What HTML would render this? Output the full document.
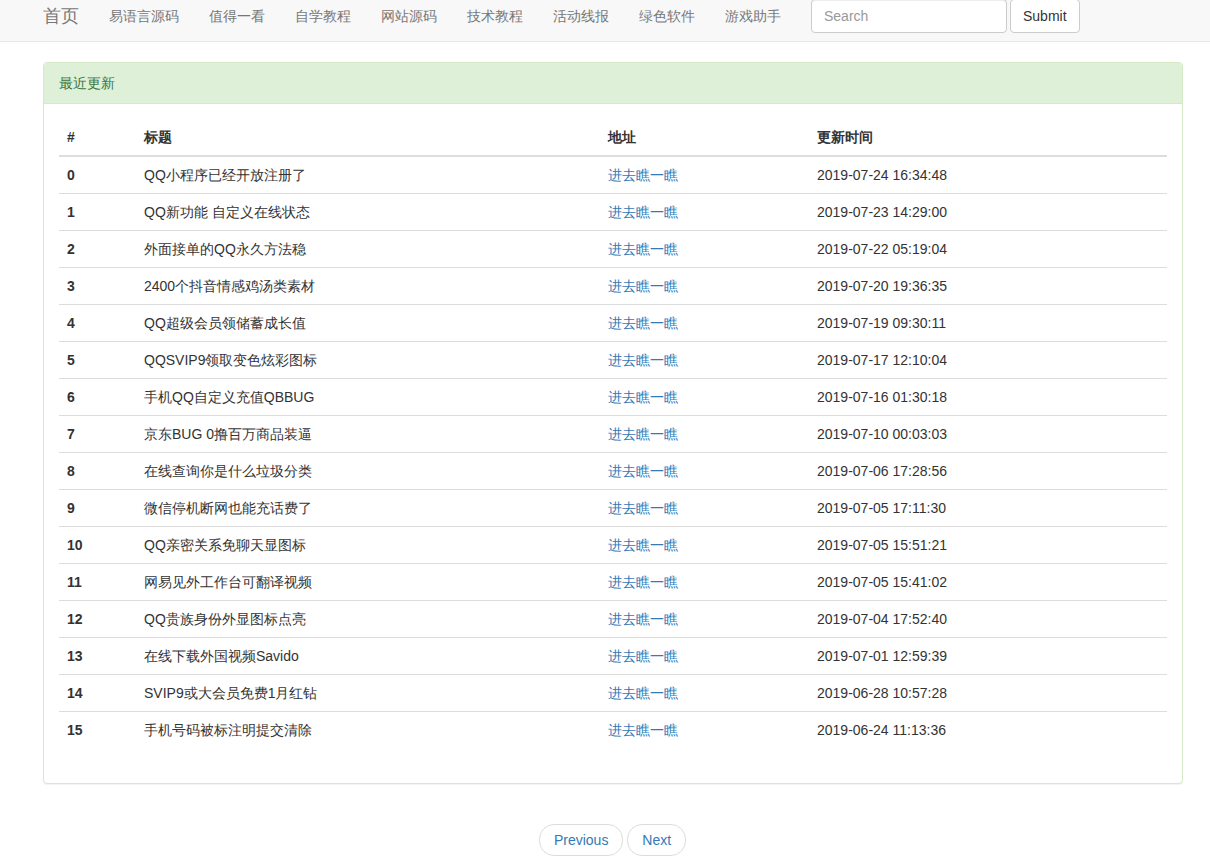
<!DOCTYPE html>
<html><head><meta charset="utf-8">
<style>
*{box-sizing:border-box;margin:0;padding:0}
html,body{width:1210px;height:861px;overflow:hidden;background:#fff}
body{font-family:"Liberation Sans",sans-serif;font-size:14px;line-height:20px;color:#333;position:relative}
.navbar{position:absolute;left:0;top:-10px;width:1210px;height:52px;background:#f8f8f8;border:1px solid #e7e7e7;border-left:0;border-right:0}
.brand{position:absolute;left:43px;top:15px;font-size:18px;line-height:20px;color:#777;white-space:nowrap}
.nav{position:absolute;left:94px;top:0;display:flex;list-style:none}
.nav li a{display:block;padding:15px;line-height:20px;color:#777;white-space:nowrap}
.sform{position:absolute;left:811px;top:8px;display:flex}
.inp{width:196px;height:34px;border:1px solid #ccc;border-radius:4px;background:#fff;box-shadow:inset 0 1px 1px rgba(0,0,0,.075);padding:6px 12px;color:#999;line-height:20px}
.btn{margin-left:3px;height:34px;border:1px solid #ccc;border-radius:4px;background:#fff;padding:6px 12px;color:#333;line-height:20px}
.panel{position:absolute;left:43px;top:62px;width:1140px;height:722px;border:1px solid #d6e9c6;border-radius:4px;background:#fff;box-shadow:0 1px 1px rgba(0,0,0,.05)}
.ph{height:41px;padding:10px 15px;background:#dff0d8;color:#3c763d;border-bottom:1px solid #d6e9c6;border-top-left-radius:3px;border-top-right-radius:3px}
.pb{padding:15px}
table{border-collapse:collapse;width:1108px;border-spacing:0}
th{text-align:left;font-weight:bold;padding:8px;line-height:20px;border-bottom:2px solid #ddd;vertical-align:bottom}
td{padding:8px;line-height:20px;border-top:1px solid #ddd;vertical-align:top}
td.n{font-weight:bold}
a{color:#337ab7;text-decoration:none}
.pager{position:absolute;left:0;top:824px;width:1225px;text-align:center;white-space:nowrap}
.pager a{display:inline-block;padding:5px 14px;border:1px solid #ddd;border-radius:15px;background:#fff;line-height:20px}
</style></head><body>
<div class="navbar">
<span class="brand">首页</span>
<ul class="nav"><li><a>易语言源码</a></li><li><a>值得一看</a></li><li><a>自学教程</a></li><li><a>网站源码</a></li><li><a>技术教程</a></li><li><a>活动线报</a></li><li><a>绿色软件</a></li><li><a>游戏助手</a></li></ul>
<div class="sform"><div class="inp">Search</div><div class="btn">Submit</div></div>
</div>
<div class="panel">
<div class="ph">最近更新</div>
<div class="pb">
<table>
<colgroup><col style="width:77px"><col style="width:464px"><col style="width:209px"><col style="width:358px"></colgroup>
<thead><tr><th>#</th><th>标题</th><th>地址</th><th>更新时间</th></tr></thead>
<tbody>
<tr><td class="n">0</td><td>QQ小程序已经开放注册了</td><td><a>进去瞧一瞧</a></td><td>2019-07-24 16:34:48</td></tr>
<tr><td class="n">1</td><td>QQ新功能 自定义在线状态</td><td><a>进去瞧一瞧</a></td><td>2019-07-23 14:29:00</td></tr>
<tr><td class="n">2</td><td>外面接单的QQ永久方法稳</td><td><a>进去瞧一瞧</a></td><td>2019-07-22 05:19:04</td></tr>
<tr><td class="n">3</td><td>2400个抖音情感鸡汤类素材</td><td><a>进去瞧一瞧</a></td><td>2019-07-20 19:36:35</td></tr>
<tr><td class="n">4</td><td>QQ超级会员领储蓄成长值</td><td><a>进去瞧一瞧</a></td><td>2019-07-19 09:30:11</td></tr>
<tr><td class="n">5</td><td>QQSVIP9领取变色炫彩图标</td><td><a>进去瞧一瞧</a></td><td>2019-07-17 12:10:04</td></tr>
<tr><td class="n">6</td><td>手机QQ自定义充值QBBUG</td><td><a>进去瞧一瞧</a></td><td>2019-07-16 01:30:18</td></tr>
<tr><td class="n">7</td><td>京东BUG 0撸百万商品装逼</td><td><a>进去瞧一瞧</a></td><td>2019-07-10 00:03:03</td></tr>
<tr><td class="n">8</td><td>在线查询你是什么垃圾分类</td><td><a>进去瞧一瞧</a></td><td>2019-07-06 17:28:56</td></tr>
<tr><td class="n">9</td><td>微信停机断网也能充话费了</td><td><a>进去瞧一瞧</a></td><td>2019-07-05 17:11:30</td></tr>
<tr><td class="n">10</td><td>QQ亲密关系免聊天显图标</td><td><a>进去瞧一瞧</a></td><td>2019-07-05 15:51:21</td></tr>
<tr><td class="n">11</td><td>网易见外工作台可翻译视频</td><td><a>进去瞧一瞧</a></td><td>2019-07-05 15:41:02</td></tr>
<tr><td class="n">12</td><td>QQ贵族身份外显图标点亮</td><td><a>进去瞧一瞧</a></td><td>2019-07-04 17:52:40</td></tr>
<tr><td class="n">13</td><td>在线下载外国视频Savido</td><td><a>进去瞧一瞧</a></td><td>2019-07-01 12:59:39</td></tr>
<tr><td class="n">14</td><td>SVIP9或大会员免费1月红钻</td><td><a>进去瞧一瞧</a></td><td>2019-06-28 10:57:28</td></tr>
<tr><td class="n">15</td><td>手机号码被标注明提交清除</td><td><a>进去瞧一瞧</a></td><td>2019-06-24 11:13:36</td></tr>
</tbody></table>
</div></div>
<div class="pager"><a>Previous</a> <a>Next</a></div>
</body></html>
